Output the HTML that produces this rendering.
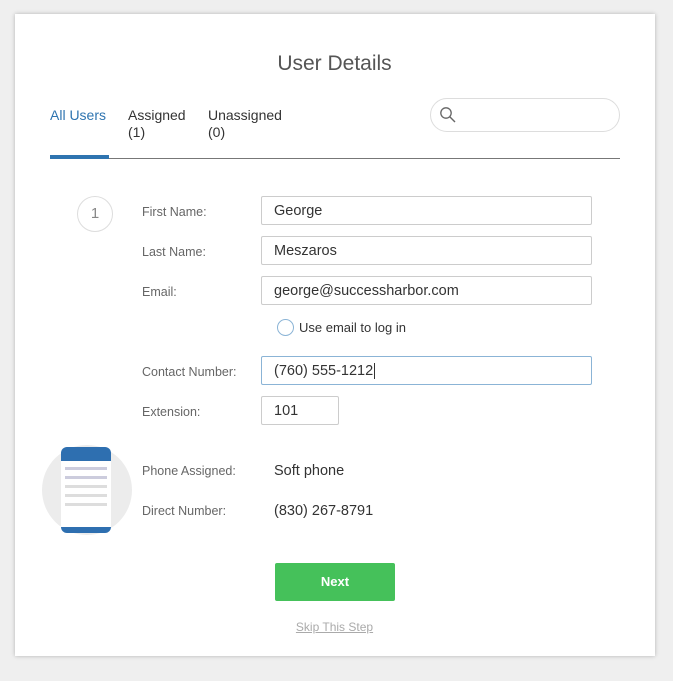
<!DOCTYPE html>
<html><head><style>
body{margin:0;width:673px;height:681px;background:#efefef;font-family:"Liberation Sans",sans-serif;position:relative;overflow:hidden}
.card{position:absolute;left:15px;top:14px;width:640px;height:642px;background:#fff;box-shadow:0 0 4px rgba(0,0,0,.25)}
.a{position:absolute}
.t{font-size:14px;color:#333}
.lbl{font-size:12.5px;color:#666}
.inp{position:absolute;border:1px solid #ccc;border-radius:2px;box-sizing:border-box;font-size:14.5px;color:#333;padding:6px 12px 0;line-height:17px;background:#fff}
</style></head><body>
<div class="card"></div>
<div class="a" style="left:0;width:669px;top:52px;text-align:center;font-size:21px;color:#555">User Details</div>
<div class="a" style="left:50px;top:107px;font-size:14px;color:#2e74b0">All Users</div>
<div class="a t" style="left:128px;top:107px;line-height:17px">Assigned<br>(1)</div>
<div class="a t" style="left:208px;top:107px;line-height:17px">Unassigned<br>(0)</div>
<div class="a" style="left:430px;top:98px;width:188px;height:32px;border:1px solid #ddd;border-radius:17px"></div>
<svg class="a" style="left:439px;top:106px" width="18" height="18" viewBox="0 0 18 18"><circle cx="7" cy="7" r="5.2" fill="none" stroke="#666" stroke-width="1.3"/><path d="M11 11L16 16" stroke="#666" stroke-width="1.4"/></svg>
<div class="a" style="left:50px;top:158px;width:570px;height:1px;background:#777"></div>
<div class="a" style="left:50px;top:155px;width:59px;height:4px;background:#2e74b0"></div>
<div class="a" style="left:77px;top:196px;width:34px;height:34px;border:1px solid #ddd;border-radius:50%;text-align:center;line-height:34px;font-size:15px;color:#888">1</div>
<div class="a lbl" style="left:142px;top:205px">First Name:</div>
<div class="inp" style="left:261px;top:196px;width:331px;height:29px">George</div>
<div class="a lbl" style="left:142px;top:245px">Last Name:</div>
<div class="inp" style="left:261px;top:236px;width:331px;height:29px">Meszaros</div>
<div class="a lbl" style="left:142px;top:285px">Email:</div>
<div class="inp" style="left:261px;top:276px;width:331px;height:29px">george@successharbor.com</div>
<div class="a" style="left:277px;top:319px;width:15px;height:15px;border:1px solid #8bb4d6;border-radius:50%"></div>
<div class="a" style="left:299px;top:320px;font-size:13px;color:#333">Use email to log in</div>
<div class="a lbl" style="left:142px;top:365px">Contact Number:</div>
<div class="inp" style="left:261px;top:356px;width:331px;height:29px;border-color:#8bb4d6">(760) 555-1212<span style="border-left:1px solid #333;margin-left:1px"></span></div>
<div class="a lbl" style="left:142px;top:405px">Extension:</div>
<div class="inp" style="left:261px;top:396px;width:78px;height:29px">101</div>
<div class="a" style="left:42px;top:445px;width:90px;height:90px;border-radius:50%;background:#ececec"></div>
<div class="a" style="left:61px;top:447px;width:50px;height:86px;background:#fff;border-radius:6px;overflow:hidden">
<div style="height:14px;background:#2e6fb0"></div>
<div style="margin:6px 4px;height:3px;background:#ccd"></div><div style="margin:6px 4px;height:3px;background:#ccd"></div><div style="margin:6px 4px;height:3px;background:#ddd"></div><div style="margin:6px 4px;height:3px;background:#ddd"></div><div style="margin:6px 4px;height:3px;background:#ddd"></div>
<div style="position:absolute;bottom:0;left:0;right:0;height:6px;background:#2e6fb0"></div></div>
<div class="a lbl" style="left:142px;top:464px">Phone Assigned:</div>
<div class="a" style="left:274px;top:463px;font-size:14.5px;color:#333">Soft phone</div>
<div class="a lbl" style="left:142px;top:504px">Direct Number:</div>
<div class="a" style="left:274px;top:503px;font-size:14.5px;color:#333">(830) 267-8791</div>
<div class="a" style="left:275px;top:563px;width:120px;height:38px;background:#45c15a;border-radius:2px;color:#fff;font-size:13px;font-weight:bold;text-align:center;line-height:38px">Next</div>
<div class="a" style="left:0;width:669px;top:620px;text-align:center;font-size:12px;color:#aaa;text-decoration:underline">Skip This Step</div>
</body></html>
